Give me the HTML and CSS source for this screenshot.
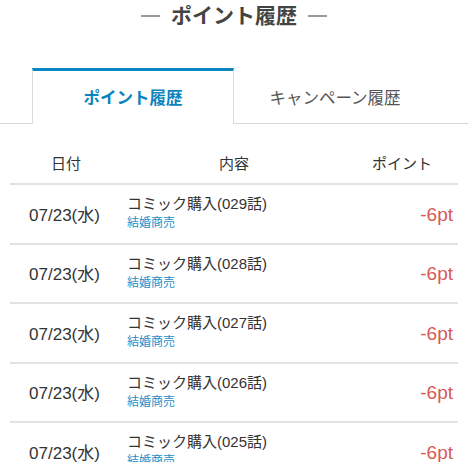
FILE: index.html
```html
<!DOCTYPE html>
<html lang="ja">
<head>
  <meta charset="UTF-8">
  <meta name="viewport" content="width=device-width, initial-scale=1.0">
  <title>ポイント履歴</title>
  <link rel="stylesheet" href="styles.css">
</head>
<body>

  <h2 class="page-title"><span class="dash"></span>ポイント履歴<span class="dash"></span></h2>

  <div class="tabs">
    <a class="tab active" href="#">ポイント履歴</a>
    <a class="tab" href="#">キャンペーン履歴</a>
  </div>

  <table class="history">
    <thead>
      <tr>
        <th class="col-date">日付</th>
        <th class="col-content">内容</th>
        <th class="col-point">ポイント</th>
      </tr>
    </thead>
    <tbody>
      <tr>
        <td class="col-date">07/23(水)</td>
        <td class="col-content"><div class="item">コミック購入(029話)</div><a class="series" href="#">結婚商売</a></td>
        <td class="col-point">-6pt</td>
      </tr>
      <tr>
        <td class="col-date">07/23(水)</td>
        <td class="col-content"><div class="item">コミック購入(028話)</div><a class="series" href="#">結婚商売</a></td>
        <td class="col-point">-6pt</td>
      </tr>
      <tr>
        <td class="col-date">07/23(水)</td>
        <td class="col-content"><div class="item">コミック購入(027話)</div><a class="series" href="#">結婚商売</a></td>
        <td class="col-point">-6pt</td>
      </tr>
      <tr>
        <td class="col-date">07/23(水)</td>
        <td class="col-content"><div class="item">コミック購入(026話)</div><a class="series" href="#">結婚商売</a></td>
        <td class="col-point">-6pt</td>
      </tr>
      <tr>
        <td class="col-date">07/23(水)</td>
        <td class="col-content"><div class="item">コミック購入(025話)</div><a class="series" href="#">結婚商売</a></td>
        <td class="col-point">-6pt</td>
      </tr>
    </tbody>
  </table>

</body>
</html>
```

FILE: styles.css
```css
body {
  margin: 0;
  padding: 0;
  font-family: 'Liberation Sans', 'Noto Sans CJK JP', sans-serif;
  background-color: #ffffff;
  color: #333333;
}

.page-title {
  margin: 0;
  padding-top: 4px;
  height: 24px;
  display: flex;
  justify-content: center;
  align-items: center;
  gap: 11px;
  font-size: 21px;
  line-height: 24px;
  font-weight: bold;
  color: #444444;
}
.page-title .dash {
  width: 19px;
  height: 2px;
  background-color: #9a9a9a;
}

.tabs {
  display: flex;
  margin-top: 40px;
  padding: 0 32px;
  border-bottom: 1px solid #d6d6d6;
}
.tab {
  flex: 1;
  height: 52px;
  display: flex;
  justify-content: center;
  align-items: center;
  font-size: 16.5px;
  color: #555555;
  text-decoration: none;
  border-top: 3px solid transparent;
  border-left: 1px solid transparent;
  border-right: 1px solid transparent;
}
.tab.active {
  color: #0a83bd;
  font-weight: bold;
  background-color: #ffffff;
  border-top-color: #0a86c2;
  border-left-color: #dcdcdc;
  border-right-color: #dcdcdc;
  margin-bottom: -1px;
  padding-bottom: 1px;
}

.history {
  width: 448px;
  margin: 17px 10px 0;
  border-collapse: collapse;
  table-layout: fixed;
}
.history th {
  height: 42px;
  font-size: 15px;
  font-weight: normal;
  color: #333333;
  text-align: center;
  vertical-align: middle;
  border-bottom: 2px solid #e2e2e2;
  padding: 0;
}
.history td {
  padding: 9px 5px 10.5px;
  border-bottom: 2px solid #e2e2e2;
  vertical-align: middle;
}
.col-date {
  width: 25%;
}
.col-content {
  width: 50%;
}
.col-point {
  width: 25%;
}
.history td.col-date {
  text-align: center;
  font-size: 17px;
  color: #333333;
  padding-right: 8px;
}
.history td.col-content {
  text-align: left;
}
.history td.col-point {
  text-align: right;
  font-size: 19px;
  color: #d65a57;
  padding-top: 12px;
}
.item {
  font-size: 15px;
  line-height: 20px;
  color: #333333;
}
.series {
  display: block;
  font-size: 12px;
  line-height: 18px;
  color: #1b8fc9;
  text-decoration: none;
}
```
